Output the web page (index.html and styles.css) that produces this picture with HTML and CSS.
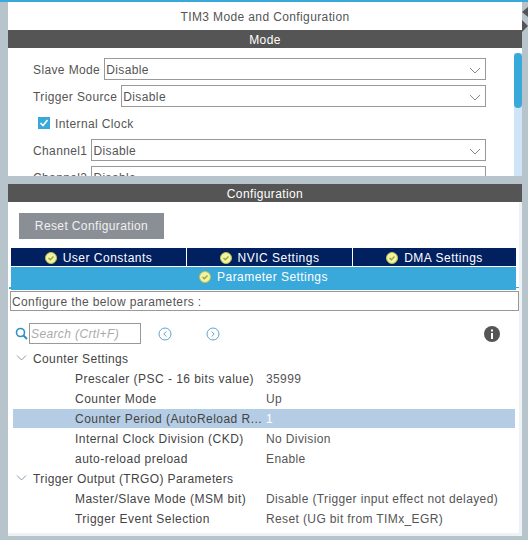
FILE: index.html
```html
<!DOCTYPE html>
<html lang="en">
<head>
    <meta charset="UTF-8">
    <title>TIM3 Mode and Configuration</title>
    <link rel="stylesheet" href="styles.css">
</head>
<body>
    <div class="topline"></div>
    <div class="window">
        <!-- grips on the right edge -->
        <div class="grips">
            <svg width="6" height="10" viewBox="0 0 6 10"><path d="M6 0V10L0 5Z" fill="#555"/></svg>
            <svg width="6" height="12" viewBox="0 0 6 12"><path d="M0 0V12L6 6Z" fill="#555"/></svg>
        </div>
        <div class="title">TIM3 Mode and Configuration</div>
        <div class="bar">Mode</div>
        <div class="mode">
            <div class="mode-form">
                <div class="field">
                    <span>Slave Mode</span>
                    <div class="select">Disable<svg class="chev" width="12" height="7" viewBox="0 0 12 7"><path d="M1 1L6 6L11 1" fill="none" stroke="#888"/></svg></div>
                </div>
                <div class="field">
                    <span>Trigger Source</span>
                    <div class="select">Disable<svg class="chev" width="12" height="7" viewBox="0 0 12 7"><path d="M1 1L6 6L11 1" fill="none" stroke="#888"/></svg></div>
                </div>
                <div class="check-row">
                    <span class="check"><svg width="12" height="12" viewBox="0 0 12 12"><path d="M2.500 6L5 8.500L9.500 3" fill="none" stroke="#fff" stroke-width="1.600"/></svg></span>
                    Internal Clock
                </div>
                <div class="field">
                    <span>Channel1</span>
                    <div class="select">Disable<svg class="chev" width="12" height="7" viewBox="0 0 12 7"><path d="M1 1L6 6L11 1" fill="none" stroke="#888"/></svg></div>
                </div>
                <div class="field">
                    <span>Channel2</span>
                    <div class="select">Disable<svg class="chev" width="12" height="7" viewBox="0 0 12 7"><path d="M1 1L6 6L11 1" fill="none" stroke="#888"/></svg></div>
                </div>
            </div>
            <div class="scroll"><div class="thumb"></div></div>
        </div>
        <div class="split"></div>
        <div class="bar">Configuration</div>
        <div class="config">
            <div class="reset">Reset Configuration</div>
            <div class="tabs">
                <div class="tab"><svg class="ok" width="12" height="12" viewBox="0 0 12 12"><circle cx="6" cy="6" r="5.500" fill="#f3f3a6" stroke="#b9c04e"/><path d="M3.500 6L5.300 7.800L8.500 4.500" fill="none" stroke="#9aa63c" stroke-width="1.400"/></svg>User Constants</div>
                <div class="tab"><svg class="ok" width="12" height="12" viewBox="0 0 12 12"><circle cx="6" cy="6" r="5.500" fill="#f3f3a6" stroke="#b9c04e"/><path d="M3.500 6L5.300 7.800L8.500 4.500" fill="none" stroke="#9aa63c" stroke-width="1.400"/></svg>NVIC Settings</div>
                <div class="tab"><svg class="ok" width="12" height="12" viewBox="0 0 12 12"><circle cx="6" cy="6" r="5.500" fill="#f3f3a6" stroke="#b9c04e"/><path d="M3.500 6L5.300 7.800L8.500 4.500" fill="none" stroke="#9aa63c" stroke-width="1.400"/></svg>DMA Settings</div>
            </div>
            <div class="tab-active"><svg class="ok" width="12" height="12" viewBox="0 0 12 12"><circle cx="6" cy="6" r="5.500" fill="#f3f3a6" stroke="#b9c04e"/><path d="M3.500 6L5.300 7.800L8.500 4.500" fill="none" stroke="#9aa63c" stroke-width="1.400"/></svg>Parameter Settings</div>
            <div class="hint">Configure the below parameters :</div>
            <div class="search-row">
                <svg class="lens" width="13" height="13" viewBox="0 0 13 13"><circle cx="5.500" cy="5.500" r="4" fill="none" stroke="#2f8fc4" stroke-width="1.600"/><path d="M8.500 8.500L12 12" stroke="#2f8fc4" stroke-width="2"/></svg>
                <div class="search">Search (Crtl+F)</div>
                <svg class="nav-btn" width="14" height="14" viewBox="0 0 14 14"><circle cx="7" cy="7" r="6" fill="none" stroke="#5aa7cf"/><path d="M8.300 4.500L5.800 7L8.300 9.500" fill="none" stroke="#5aa7cf"/></svg>
                <svg class="nav-btn next" width="14" height="14" viewBox="0 0 14 14"><circle cx="7" cy="7" r="6" fill="none" stroke="#5aa7cf"/><path d="M5.700 4.500L8.200 7L5.700 9.500" fill="none" stroke="#5aa7cf"/></svg>
                <svg class="info" width="16" height="16" viewBox="0 0 16 16"><circle cx="8" cy="8" r="8" fill="#555"/><rect x="7" y="7" width="2" height="6" fill="#fff"/><rect x="7" y="3.500" width="2" height="2" fill="#fff"/></svg>
            </div>
            <div class="tree">
                <div class="group"><svg width="11" height="6" viewBox="0 0 11 6"><path d="M1 .5L5.500 5L10 .5" fill="none" stroke="#8a9aa8"/></svg>Counter Settings</div>
                <div class="row"><span>Prescaler (PSC - 16 bits value)</span><span>35999</span></div>
                <div class="row"><span>Counter Mode</span><span>Up</span></div>
                <div class="row selected"><span>Counter Period (AutoReload R...</span><span>1</span></div>
                <div class="row"><span>Internal Clock Division (CKD)</span><span>No Division</span></div>
                <div class="row"><span>auto-reload preload</span><span>Enable</span></div>
                <div class="group"><svg width="11" height="6" viewBox="0 0 11 6"><path d="M1 .5L5.500 5L10 .5" fill="none" stroke="#8a9aa8"/></svg>Trigger Output (TRGO) Parameters</div>
                <div class="row"><span>Master/Slave Mode (MSM bit)</span><span>Disable (Trigger input effect not delayed)</span></div>
                <div class="row"><span>Trigger Event Selection</span><span>Reset (UG bit from TIMx_EGR)</span></div>
            </div>
        </div>
    </div>
</body>
</html>
```
FILE: styles.css
```css
*{
    margin: 0;
    padding: 0;
    box-sizing: border-box;
}
html,body{
    height: 540px;
    overflow: hidden;
}
body{
    background-color: #b8c4cc;
    font-family: "Liberation Sans", Arial, sans-serif;
    font-size: 12px;
    letter-spacing: .38px;
    color: #555;
}
.topline{
    height: 2px;
    background-color: #39a9dc;
}
.window{
    position: relative;
    width: 514px;
    margin-left: 8px;
}
.grips{
    position: absolute;
    left: 514px;
    top: 5px;
    width: 6px;
    display: flex;
    flex-direction: column;
    gap: 3px;
}
.grips svg{
    display: block;
}
.title{
    height: 28px;
    line-height: 30px;
    background-color: #fff;
    text-align: center;
}
.bar{
    height: 18px;
    line-height: 20px;
    background-color: #555;
    color: #fff;
    text-align: center;
}
.mode{
    height: 128px;
    background-color: #fff;
    display: flex;
    overflow: hidden;
}
.mode-form{
    width: 478px;
    padding: 10px 0 0 25px;
    flex: none;
}
.field{
    height: 22px;
    margin-bottom: 5px;
    padding-top: 2px;
    display: flex;
    align-items: center;
    gap: 4px;
    white-space: nowrap;
}
.select{
    flex: 1;
    height: 22px;
    margin-top: -2px;
    padding: 2px 0 0 1px;
    border: 1px solid #999;
    color: #555;
    display: flex;
    justify-content: space-between;
    align-items: center;
}
.chev{
    margin-right: 4px;
}
.check-row{
    height: 22px;
    margin-bottom: 5px;
    padding: 2px 0 0 5px;
    display: flex;
    align-items: center;
    gap: 5px;
}
.check{
    width: 12px;
    height: 12px;
    margin-top: -2px;
    background-color: #39a9dc;
    display: block;
}
.check svg{
    display: block;
}
.scroll{
    width: 8px;
    margin-left: 28px;
    margin-top: 5px;
    background-color: #cfe4f6;
}
.thumb{
    height: 55px;
    background-color: #39a9dc;
    border-radius: 4px;
}
.split{
    height: 8px;
}
.config{
    height: 334px;
    background-color: #fff;
    border-right: 3px solid #eef2f5;
    border-bottom: 3px solid #eef2f5;
    padding: 11px 0 0 2px;
}
.reset{
    width: 145px;
    height: 26px;
    line-height: 27px;
    margin-left: 9px;
    background-color: #8a8f96;
    color: #f0f0f0;
    text-align: center;
}
.tabs{
    width: 505px;
    margin: 9px 0 0 1px;
    display: grid;
    grid-template-columns: 175px 165px 1fr;
    gap: 1px;
    letter-spacing: .5px;
}
.tab{
    height: 18px;
    padding-top: 2px;
    background-color: #002060;
    color: #fff;
    display: flex;
    align-items: center;
    justify-content: center;
}
.tab-active{
    position: relative;
    width: 505px;
    height: 23px;
    margin: 1px 0 0 1px;
    background-color: #39a9dc;
    color: #fff;
    display: flex;
    align-items: center;
    justify-content: center;
    padding-bottom: 3px;
    letter-spacing: .45px;
}
/* little blue ends sticking out of the tab */
.tab-active::before{
    content: "";
    position: absolute;
    left: -2px;
    bottom: 1px;
    width: 2px;
    height: 2px;
    background-color: #39a9dc;
}
.tab-active::after{
    content: "";
    position: absolute;
    right: -3px;
    bottom: 2px;
    width: 3px;
    height: 1px;
    background-color: #39a9dc;
}
.ok{
    margin-right: 6px;
    margin-top: -1px;
    display: block;
    flex: none;
}
.hint{
    width: 509px;
    height: 20px;
    line-height: 20px;
    margin-top: 1px;
    padding-left: 1px;
    border: 1px solid #999;
    color: #555;
}
.search-row{
    height: 21px;
    margin-top: 12px;
    padding-left: 5px;
    display: flex;
    align-items: center;
}
.lens{
    margin-right: 1px;
}
.search{
    width: 112px;
    height: 21px;
    line-height: 21px;
    padding-left: 1px;
    border: 1px solid #999;
    color: #aaa;
    font-style: italic;
}
.nav-btn{
    margin-left: 17px;
}
.nav-btn.next{
    margin-left: 34px;
}
.info{
    margin-left: 264px;
}
.tree{
    margin-top: 4px;
    padding-left: 3px;
}
.group{
    height: 20px;
    padding: 2px 0 0 3px;
    color: #444;
    display: flex;
    align-items: center;
    gap: 6px;
}
.group svg{
    margin-top: -2px;
}
.row{
    height: 20px;
    width: 502px;
    padding-top: 2px;
    display: flex;
    align-items: center;
    white-space: nowrap;
}
.row span:first-child{
    width: 253px;
    padding-left: 62px;
    flex: none;
    color: #444;
    letter-spacing: .46px;
}
.row span:last-child{
    color: #555;
}
.selected{
    height: 19px;
    margin-top: 1px;
    padding-top: 1px;
    background-color: #b4cde4;
}
.selected span:last-child{
    color: #fff;
}
```
